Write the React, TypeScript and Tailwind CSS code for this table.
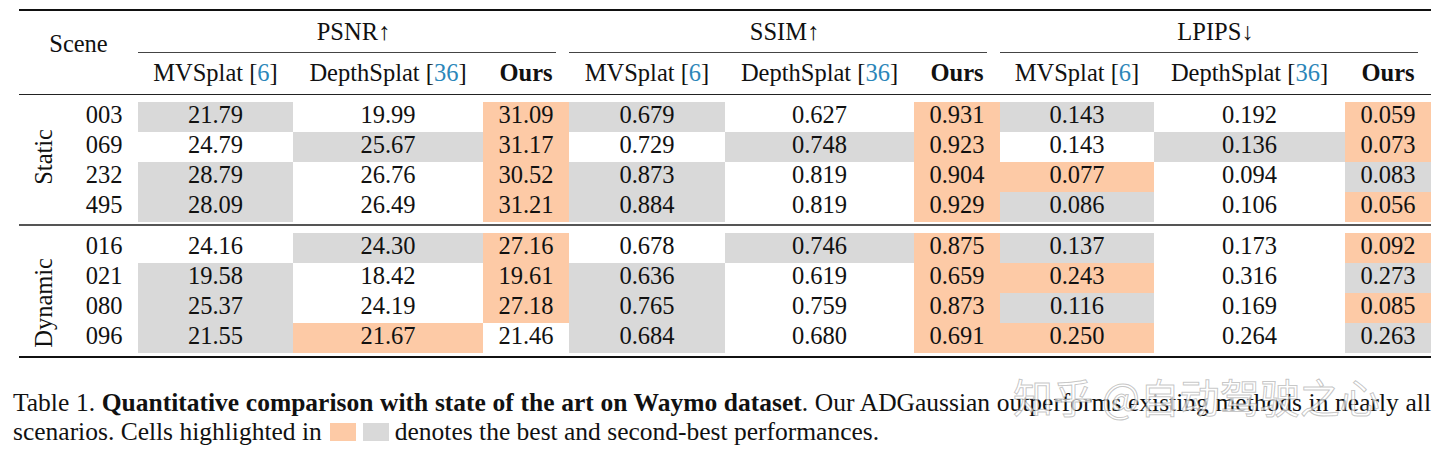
import React from "react";

const COLS =
  "grid-cols-[51px_68px_155px_190px_86px_156px_189px_86px_154px_191px_86px]";

type Row = { id: string; values: string; marks: string };

const staticRows: Row[] = [
  { id: "003", values: "21.79 19.99 31.09 0.679 0.627 0.931 0.143 0.192 0.059", marks: "g-og-og-o" },
  { id: "069", values: "24.79 25.67 31.17 0.729 0.748 0.923 0.143 0.136 0.073", marks: "-go-go-go" },
  { id: "232", values: "28.79 26.76 30.52 0.873 0.819 0.904 0.077 0.094 0.083", marks: "g-og-oo-g" },
  { id: "495", values: "28.09 26.49 31.21 0.884 0.819 0.929 0.086 0.106 0.056", marks: "g-og-og-o" },
];

const dynamicRows: Row[] = [
  { id: "016", values: "24.16 24.30 27.16 0.678 0.746 0.875 0.137 0.173 0.092", marks: "-go-gog-o" },
  { id: "021", values: "19.58 18.42 19.61 0.636 0.619 0.659 0.243 0.316 0.273", marks: "g-og-oo-g" },
  { id: "080", values: "25.37 24.19 27.18 0.765 0.759 0.873 0.116 0.169 0.085", marks: "g-og-og-o" },
  { id: "096", values: "21.55 21.67 21.46 0.684 0.680 0.691 0.250 0.264 0.263", marks: "go-g-oo-g" },
];

// column starts for the three metric groups
const groupStart = ["col-start-3", "col-start-6", "col-start-9"];
const subStart = [
  ["col-start-3", "col-start-4", "col-start-5"],
  ["col-start-6", "col-start-7", "col-start-8"],
  ["col-start-9", "col-start-10", "col-start-11"],
];

function markClass(m: string) {
  if (m === "g") return "bg-[#d9d9d9]";
  if (m === "o") return "bg-[#fdcaa6]";
  return "";
}

function Cite({ n }: { n: string }) {
  return (
    <>
      [<span className="text-[#2b86b9]">{n}</span>]
    </>
  );
}

function Group({ label, rows, shift }: { label: string; rows: Row[]; shift: string }) {
  return (
    <div className={`grid ${COLS} grid-rows-[30px_30px_30px_30px]`}>
      <div className="col-start-1 row-span-4 row-start-1 flex items-center justify-center">
        <span className={`[writing-mode:vertical-rl] rotate-180 leading-none ${shift}`}>
          {label}
        </span>
      </div>
      {rows.map((r) => (
        <React.Fragment key={r.id}>
          <div className="col-start-2 h-[30px] pb-[4px] text-center leading-[26px]">{r.id}</div>
          {r.values.split(" ").map((v, i) => (
            <div
              key={i}
              className={`h-[30px] pb-[4px] text-center leading-[26px] ${markClass(r.marks[i])}`}
            >
              {v}
            </div>
          ))}
        </React.Fragment>
      ))}
    </div>
  );
}

export default function App() {
  const metrics = ["PSNR↑", "SSIM↑", "LPIPS↓"];

  return (
    <div className="relative h-[450px] w-[1440px] overflow-hidden bg-white pl-[13px] pt-[9px] font-['Liberation_Serif','Times_New_Roman',serif] text-[#111]">
      {/* table */}
      <div className="ml-[6px] w-[1412px] text-[24.5px]">
        <div className="h-[2px] bg-[#111]" />

        <div className={`grid ${COLS} grid-rows-[41px_1px_41px]`}>
          <div className="col-span-2 col-start-1 row-span-3 row-start-1 pt-[20px] text-center leading-[26px]">
            Scene
          </div>
          {metrics.map((m, i) => (
            <div
              key={m}
              className={`col-span-3 row-start-1 pt-[8px] text-center leading-[26px] ${groupStart[i]}`}
            >
              {m}
            </div>
          ))}
          {metrics.map((m, i) => (
            <div
              key={m + "rule"}
              className={`col-span-3 row-start-2 mr-[13px] bg-[#444] ${groupStart[i]}`}
            />
          ))}
          {metrics.map((m, i) => (
            <React.Fragment key={m + "sub"}>
              <div className={`row-start-3 pt-[7px] text-center leading-[26px] ${subStart[i][0]}`}>
                MVSplat <Cite n="6" />
              </div>
              <div className={`row-start-3 pt-[7px] text-center leading-[26px] ${subStart[i][1]}`}>
                DepthSplat <Cite n="36" />
              </div>
              <div className={`row-start-3 pt-[7px] text-center font-bold leading-[26px] ${subStart[i][2]}`}>
                Ours
              </div>
            </React.Fragment>
          ))}
        </div>

        <div className="h-px bg-[#222]" />

        <div className="mt-[7px]">
          <Group label="Static" rows={staticRows} shift="-translate-y-[5px]" />
        </div>

        <div className="mt-[2px] h-[2px] bg-[#555]" />

        <div className="mt-[7px]">
          <Group label="Dynamic" rows={dynamicRows} shift="translate-y-[10px]" />
        </div>

        <div className="mt-[3px] h-[2px] bg-[#111]" />
      </div>

      {/* caption */}
      <div className="mt-[29px] w-[1418px] text-[25.5px] leading-[31px]">
        <div className="text-justify [text-align-last:justify]">
          Table 1. <span className="font-bold">Quantitative comparison with state of the art on Waymo dataset</span>. Our ADGaussian outperforms existing methods in nearly all
        </div>
        <div className="-mt-[2px]">
          scenarios. Cells highlighted in<span className="ml-[8px] inline-block h-[18px] w-[26px] bg-[#fdcaa6] align-[-1px]" /><span className="ml-[7px] inline-block h-[18px] w-[26px] bg-[#d9d9d9] align-[-1px]" /><span className="ml-[6px]">denotes the best and second-best performances.</span>
        </div>
      </div>

      {/* watermark */}
      <div className="absolute left-[1013px] top-[376px] whitespace-nowrap font-['Noto_Sans_CJK_SC',sans-serif] text-[40px] leading-none text-white/70 [-webkit-text-stroke:1px_rgba(110,110,110,0.4)]">
        知乎 @自动驾驶之心
      </div>
    </div>
  );
}
